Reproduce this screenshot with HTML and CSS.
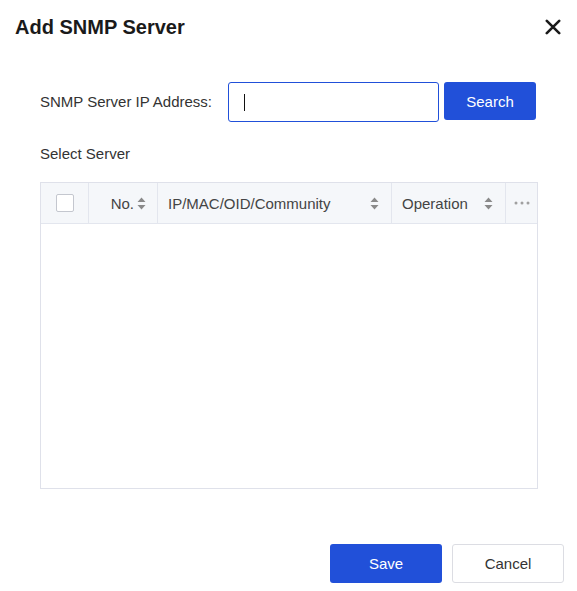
FILE: index.html
```html
<!DOCTYPE html>
<html lang="en">
<head>
    <meta charset="UTF-8">
    <meta name="viewport" content="width=device-width, initial-scale=1.0">
    <title>Add SNMP Server</title>
    <link rel="stylesheet" href="styles.css">
</head>
<body>
    <div class="snmp-dialog">
        <div class="dialog-header">
            <h2 class="dialog-title">Add SNMP Server</h2>
            <button class="dialog-close" aria-label="Close">
                <svg width="16" height="16" viewBox="0 0 16 16">
                    <path d="M1.8 1.8 L14.2 14.2 M14.2 1.8 L1.8 14.2" stroke="#1a1a1a" stroke-width="2.6" stroke-linecap="round"/>
                </svg>
            </button>
        </div>

        <div class="dialog-body">
            <div class="search-row">
                <label class="field-label">SNMP Server IP Address:</label>
                <div class="ip-input"><span class="caret"></span></div>
                <button class="btn btn-primary btn-search">Search</button>
            </div>

            <div class="section-label">Select Server</div>

            <div class="server-table">
                <div class="table-head">
                    <div class="th th-check"><span class="checkbox"></span></div>
                    <div class="th th-no">
                        <span>No.</span>
                        <svg class="sort-icon" width="9" height="13" viewBox="0 0 9 13"><path d="M4.5 0.5 L8.5 5 L0.5 5 Z M4.5 12.5 L8.5 8 L0.5 8 Z" fill="#8a8a8a"/></svg>
                    </div>
                    <div class="th th-ip">
                        <span>IP/MAC/OID/Community</span>
                        <svg class="sort-icon" width="9" height="13" viewBox="0 0 9 13"><path d="M4.5 0.5 L8.5 5 L0.5 5 Z M4.5 12.5 L8.5 8 L0.5 8 Z" fill="#8a8a8a"/></svg>
                    </div>
                    <div class="th th-op">
                        <span>Operation</span>
                        <svg class="sort-icon" width="9" height="13" viewBox="0 0 9 13"><path d="M4.5 0.5 L8.5 5 L0.5 5 Z M4.5 12.5 L8.5 8 L0.5 8 Z" fill="#8a8a8a"/></svg>
                    </div>
                    <div class="th th-more">
                        <svg width="16" height="4" viewBox="0 0 16 4"><circle cx="2" cy="2" r="1.5" fill="#a0a0a0"/><circle cx="8" cy="2" r="1.5" fill="#a0a0a0"/><circle cx="14" cy="2" r="1.5" fill="#a0a0a0"/></svg>
                    </div>
                </div>
                <div class="table-body"></div>
            </div>
        </div>

        <div class="dialog-footer">
            <button class="btn btn-primary btn-save">Save</button>
            <button class="btn btn-default">Cancel</button>
        </div>
    </div>
</body>
</html>
```

FILE: styles.css
```css
* {
    margin: 0;
    padding: 0;
    box-sizing: border-box;
    font-family: 'Liberation Sans', Arial, sans-serif;
}

body {
    background: #fff;
    color: #333;
}

.snmp-dialog {
    width: 577px;
    height: 591px;
    background: #fff;
}

.dialog-header {
    height: 54px;
    display: flex;
    justify-content: space-between;
    align-items: center;
    padding: 0 16px 0 15px;
}

.dialog-title {
    font-size: 20px;
    font-weight: bold;
    color: #1a1a1a;
}

.dialog-close {
    border: none;
    background: none;
    width: 16px;
    height: 16px;
    display: flex;
    cursor: pointer;
}

.dialog-body {
    padding: 28px 39px 0 40px;
}

.search-row {
    display: flex;
    align-items: flex-start;
    height: 40px;
}

.field-label {
    width: 188px;
    font-size: 15px;
    line-height: 40px;
    color: #333;
}

.ip-input {
    width: 211px;
    height: 40px;
    border: 1px solid #2150d9;
    border-radius: 3px;
    padding: 0 15px;
    display: flex;
    align-items: center;
}

.caret {
    width: 1px;
    height: 17px;
    background: #111;
}

.btn {
    border-radius: 3px;
    font-size: 15px;
    cursor: pointer;
    border: 1px solid transparent;
}

.btn-primary {
    background: #2150d9;
    color: #fff;
}

.btn-search {
    width: 92px;
    height: 38px;
    margin-left: 5px;
}

.section-label {
    margin-top: 22px;
    font-size: 15px;
    line-height: 20px;
    color: #333;
}

.server-table {
    margin-top: 18px;
    width: 498px;
    height: 307px;
    border: 1px solid #dfe1ea;
}

.table-head {
    display: grid;
    grid-template-columns: 48px 69px 234px 114px 1fr;
    height: 41px;
    background: #f5f7fa;
    border-bottom: 1px solid #e3e6ee;
    font-size: 15px;
    color: #444;
}

.th {
    display: flex;
    align-items: center;
    border-right: 1px solid #e3e6ee;
    padding: 0 10px;
}

.th-more {
    border-right: none;
    justify-content: center;
    padding: 0;
}

.th-check {
    justify-content: center;
    padding: 0;
}

.checkbox {
    width: 18px;
    height: 18px;
    border: 1px solid #c4c7cf;
    border-radius: 2px;
    background: #fff;
}

.th-no {
    justify-content: flex-end;
    gap: 3px;
    padding-right: 11px;
}

.th-ip,
.th-op {
    justify-content: space-between;
    padding-right: 12px;
}

.sort-icon {
    flex-shrink: 0;
}

.dialog-footer {
    display: flex;
    justify-content: flex-end;
    gap: 10px;
    padding: 55px 13px 0 0;
}

.btn-save,
.btn-default {
    width: 112px;
    height: 39px;
}

.btn-default {
    background: #fff;
    color: #333;
    border-color: #dcdde3;
}
```
